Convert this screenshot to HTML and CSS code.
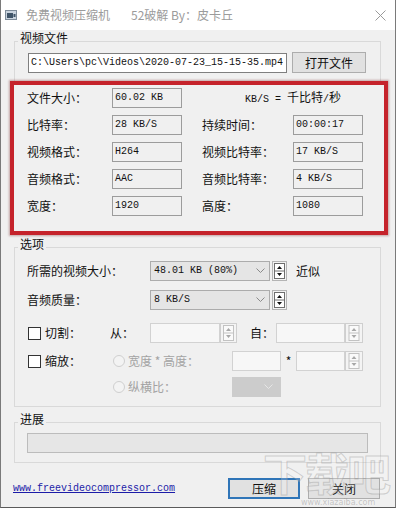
FILE: index.html
```html
<!DOCTYPE html>
<html lang="zh">
<head>
<meta charset="utf-8">
<title>免费视频压缩机</title>
<link rel="stylesheet" href="styles.css">
</head>
<body>
<div class="window">
  <div class="titlebar">
    <svg class="app-icon" width="12" height="10" viewBox="0 0 12 10">
      <rect x="0.5" y="0.5" width="11" height="9" fill="#c9d3de" stroke="#7d8b99"/>
      <rect x="2" y="3" width="6" height="5" fill="#3f5468"/>
      <rect x="8.5" y="4" width="2" height="3" fill="#3f5468"/>
    </svg>
    <span class="title">免费视频压缩机</span>
    <span class="title sub">52破解 By：皮卡丘</span>
    <svg class="close" width="11" height="11" viewBox="0 0 11 11">
      <path d="M0.5 0.5 L10.5 10.5 M10.5 0.5 L0.5 10.5" stroke="#9a9a9a" stroke-width="1"/>
    </svg>
  </div>

  <div class="client">
    <fieldset class="group g-file">
      <legend>视频文件</legend>
      <div class="path-row">
        <div class="edit path mono">C:\Users\pc\Videos\2020-07-23_15-15-35.mp4</div>
        <div class="btn btn-open">打开文件</div>
      </div>
      <div class="redbox">
        <div class="info-grid">
          <span class="lbl">文件大小：</span>
          <div class="val mono">60.02 KB</div>
          <span class="unit"><span class="mono">KB/S = </span>千比特<span class="mono">/</span>秒</span>

          <span class="lbl">比特率：</span>
          <div class="val mono">28 KB/S</div>
          <span></span>
          <span class="lbl">持续时间：</span>
          <div class="val mono">00:00:17</div>

          <span class="lbl">视频格式：</span>
          <div class="val mono">H264</div>
          <span></span>
          <span class="lbl">视频比特率：</span>
          <div class="val mono">17 KB/S</div>

          <span class="lbl">音频格式：</span>
          <div class="val mono">AAC</div>
          <span></span>
          <span class="lbl">音频比特率：</span>
          <div class="val mono">4 KB/S</div>

          <span class="lbl">宽度：</span>
          <div class="val mono">1920</div>
          <span></span>
          <span class="lbl">高度：</span>
          <div class="val mono">1080</div>
        </div>
      </div>
    </fieldset>

    <fieldset class="group g-opt">
      <legend>选项</legend>
      <div class="opt-row row-a">
        <span class="opt-lbl">所需的视频大小：</span>
        <div class="combo mono"><span>48.01 KB (80%)</span>
          <svg class="chev" width="9" height="6" viewBox="0 0 9 6"><path d="M0.5 0.5 L4.5 4.5 L8.5 0.5" fill="none" stroke="#8a8a8a"/></svg>
        </div>
        <svg class="spin spin-on" width="15" height="20" viewBox="0 0 15 20">
          <rect x="0.5" y="0.5" width="14" height="19" fill="#f2f2f2" stroke="#b4b4b4"/>
          <rect x="2.5" y="2.5" width="10" height="15" fill="#ffffff" stroke="#6e6e6e"/>
          <path d="M2.5 10 H12.5" stroke="#6e6e6e"/>
          <path d="M5 8 L7.5 5 L10 8 Z M5 12 L10 12 L7.5 15 Z" fill="#111"/>
        </svg>
        <span class="approx">近似</span>
      </div>
      <div class="opt-row row-b">
        <span class="opt-lbl">音频质量：</span>
        <div class="combo mono"><span>8 KB/S</span>
          <svg class="chev" width="9" height="6" viewBox="0 0 9 6"><path d="M0.5 0.5 L4.5 4.5 L8.5 0.5" fill="none" stroke="#8a8a8a"/></svg>
        </div>
        <svg class="spin spin-on" width="15" height="20" viewBox="0 0 15 20">
          <rect x="0.5" y="0.5" width="14" height="19" fill="#f2f2f2" stroke="#b4b4b4"/>
          <rect x="2.5" y="2.5" width="10" height="15" fill="#ffffff" stroke="#6e6e6e"/>
          <path d="M2.5 10 H12.5" stroke="#6e6e6e"/>
          <path d="M5 8 L7.5 5 L10 8 Z M5 12 L10 12 L7.5 15 Z" fill="#111"/>
        </svg>
      </div>
      <div class="opt-row row-c">
        <label class="chk-label"><span class="chk"></span>切割：</label>
        <span class="from">从：</span>
        <div class="edit-off w70"></div>
        <svg class="spin" width="17" height="20" viewBox="0 0 17 20">
          <rect x="0.5" y="0.5" width="16" height="19" fill="#f4f4f4" stroke="#cfcfcf"/>
          <rect x="3.5" y="2.5" width="10" height="15" fill="#fafafa" stroke="#c2c2c2"/>
          <path d="M3.5 10 H13.5" stroke="#c2c2c2"/>
          <path d="M6 8 L8.5 5 L11 8 Z M6 12 L11 12 L8.5 15 Z" fill="#a8a8a8"/>
        </svg>
        <span class="to">自：</span>
        <div class="edit-off w69"></div>
        <svg class="spin" width="18" height="20" viewBox="0 0 18 20">
          <rect x="0.5" y="0.5" width="17" height="19" fill="#f4f4f4" stroke="#cfcfcf"/>
          <rect x="4" y="2.5" width="10" height="15" fill="#fafafa" stroke="#c2c2c2"/>
          <path d="M4 10 H14" stroke="#c2c2c2"/>
          <path d="M6.5 8 L9 5 L11.5 8 Z M6.5 12 L11.5 12 L9 15 Z" fill="#a8a8a8"/>
        </svg>
      </div>
      <div class="opt-row row-d">
        <label class="chk-label"><span class="chk"></span>缩放：</label>
        <span class="radio-lbl"><span class="radio"></span>宽度 * 高度：</span>
        <div class="edit-off w49"></div>
        <span class="star">*</span>
        <div class="edit-off w49"></div>
        <svg class="spin" width="18" height="20" viewBox="0 0 18 20">
          <rect x="0.5" y="0.5" width="17" height="19" fill="#f4f4f4" stroke="#cfcfcf"/>
          <rect x="4" y="2.5" width="10" height="15" fill="#fafafa" stroke="#c2c2c2"/>
          <path d="M4 10 H14" stroke="#c2c2c2"/>
          <path d="M6.5 8 L9 5 L11.5 8 Z M6.5 12 L11.5 12 L9 15 Z" fill="#a8a8a8"/>
        </svg>
      </div>
      <div class="opt-row row-e">
        <span class="chk-space"></span>
        <span class="radio-lbl"><span class="radio"></span>纵横比：</span>
        <div class="combo-off">
          <svg class="chev" width="9" height="6" viewBox="0 0 9 6"><path d="M0.5 0.5 L4.5 4.5 L8.5 0.5" fill="none" stroke="#e6e6e6"/></svg>
        </div>
      </div>
    </fieldset>

    <fieldset class="group g-prog">
      <legend>进展</legend>
      <div class="progress"></div>
    </fieldset>

    <div class="footer">
      <a class="link mono" href="#">www.freevideocompressor.com</a>
      <div class="btn btn-default">压缩</div>
      <div class="btn btn-close">关闭</div>
    </div>
  </div>

  <div class="watermark">下载吧</div>
  <div class="watermark-url">www.xiazaiba.com</div>
</div>
</body>
</html>
```

FILE: styles.css
```css
* { box-sizing: border-box; }

html, body {
  margin: 0;
  padding: 0;
  background: #f0f0f0;
  overflow: hidden;
}

body {
  font-family: "Noto Sans CJK SC", "Noto Sans", sans-serif;
  font-size: 12px;
  line-height: 16px;
  color: #111;
}

.mono {
  font-family: "Liberation Mono", "DejaVu Sans Mono", monospace;
  font-size: 10px;
}

.window {
  position: relative;
  width: 396px;
  height: 508px;
  background: #f0f0f0;
  border-left: 1px solid #7a7a7a;
  border-right: 1px solid #7a7a7a;
  border-bottom: 1px solid #5a5a5a;
  overflow: hidden;
}

/* title bar */
.titlebar {
  height: 30px;
  background: #ffffff;
  display: flex;
  align-items: center;
  padding-left: 4px;
}
.app-icon { margin-right: 9px; }
.title {
  color: #9b9b9b;
  font-size: 12px;
  letter-spacing: 0;
}
.title.sub { margin-left: 21px; }
.close { margin-left: auto; margin-right: 9px; }

/* client area */
.client {
  padding: 0 14px 0 13px;
}

.group {
  margin: 0;
  border: 1px solid #d9d9d9;
  min-width: 0;
  padding: 0 14px 0 12px;
}
.group legend {
  padding: 0 2px 6px;
  margin-left: -9px;
  font-size: 12px;
  line-height: 16px;
}

/* file group */
.path-row {
  display: flex;
  align-items: center;
  height: 21px;
}
.edit {
  background: #fff;
  border: 1px solid #7f7f7f;
  height: 20px;
  line-height: 18px;
  padding-left: 2px;
  white-space: nowrap;
  overflow: hidden;
}
.path {
  width: 259px;
  margin-left: 1px;
}
.btn {
  background: #e1e1e1;
  border: 1px solid #adadad;
  height: 21px;
  display: flex;
  align-items: center;
  justify-content: center;
  font-size: 12px;
}
.btn-open {
  width: 74px;
  margin-left: 5px;
}

.redbox {
  margin: 8px -22px -4px -17px;
  border: 4px solid #c5232b;
  background: #f0f0f0;
  box-shadow: 0 0 2px 1px rgba(110, 20, 20, 0.35);
  padding: 3px 0 15px 13px;
  position: relative;
}
.info-grid {
  display: grid;
  grid-template-columns: 85px 70px 20px 91px 70px;
  grid-auto-rows: 20px;
  row-gap: 7px;
  align-items: center;
}
.lbl { white-space: nowrap; }
.val {
  height: 20px;
  border: 1px solid #9c9c9c;
  line-height: 18px;
  padding-left: 2px;
  white-space: nowrap;
}
.unit {
  grid-column: 3 / 6;
  padding-left: 63px;
  white-space: nowrap;
}
.unit .mono { font-size: 10px; }

/* options group */
.g-opt {
  margin-top: 4px;
  padding-bottom: 9px;
}
.opt-row {
  display: flex;
  align-items: center;
  height: 20px;
  white-space: nowrap;
}
.row-a { margin-top: 3px; }
.row-b { margin-top: 9px; }
.row-c { margin-top: 13px; }
.row-d { margin-top: 8px; }
.row-e { margin-top: 6px; }

.opt-lbl { width: 123px; }
.combo {
  width: 120px;
  height: 20px;
  background: #e5e5e5;
  border: 1px solid #acacac;
  display: flex;
  align-items: center;
  padding-left: 3px;
}
.combo .chev { margin-left: auto; margin-right: 4px; }
.spin-on { margin-left: 2px; }
.approx { margin-left: 9px; }

.chk-label {
  display: flex;
  align-items: center;
  width: 82px;
  margin-left: 1px;
}
.chk-space { width: 83px; }
.chk {
  width: 13px;
  height: 13px;
  background: #fff;
  border: 1px solid #333;
  margin-right: 4px;
}
.from { width: 40px; }
.to { margin-left: 13px; width: 26px; }

.edit-off {
  height: 20px;
  background: #f7f7f7;
  border: 1px solid #d2d2d2;
}
.w70 { width: 70px; }
.w69 { width: 69px; }
.w49 { width: 49px; }

.radio-lbl {
  display: flex;
  align-items: center;
  width: 119px;
  margin-left: 3px;
  color: #a3a3a3;
}
.radio {
  width: 12px;
  height: 12px;
  border-radius: 50%;
  border: 1px solid #cfcfcf;
  background: #f3f3f3;
  margin-right: 3px;
}
.star {
  width: 15px;
  text-align: center;
}

.combo-off {
  width: 49px;
  height: 20px;
  background: #cccccc;
  display: flex;
  align-items: center;
}
.combo-off .chev { margin-left: auto; margin-right: 8px; }

/* progress group */
.g-prog {
  margin-top: 4px;
  padding-bottom: 9px;
}
.progress {
  height: 20px;
  width: 341px;
  background: #e6e6e6;
  border: 1px solid #bcbcbc;
}

/* footer */
.footer {
  display: flex;
  align-items: center;
  margin-top: 15px;
  margin-left: -1px;
  margin-right: 1px;
}
.link {
  color: #1c1ca8;
  text-decoration: underline;
}
.btn-default {
  margin-left: auto;
  width: 72px;
  border: 2px solid #2f75b8;
}
.btn-close {
  width: 72px;
  margin-left: 8px;
}

/* watermark overlay */
.watermark {
  position: absolute;
  left: 262px;
  top: 444px;
  font-size: 44px;
  line-height: 56px;
  font-weight: bold;
  color: rgba(255, 255, 255, 0.2);
  -webkit-text-stroke: 1px rgba(150, 150, 150, 0.4);
  pointer-events: none;
  letter-spacing: -2px;
}
.watermark-url {
  position: absolute;
  left: 300px;
  top: 499px;
  font-family: "DejaVu Sans", sans-serif;
  font-size: 8px;
  line-height: 8px;
  color: rgba(140, 140, 140, 0.45);
  pointer-events: none;
}
```
